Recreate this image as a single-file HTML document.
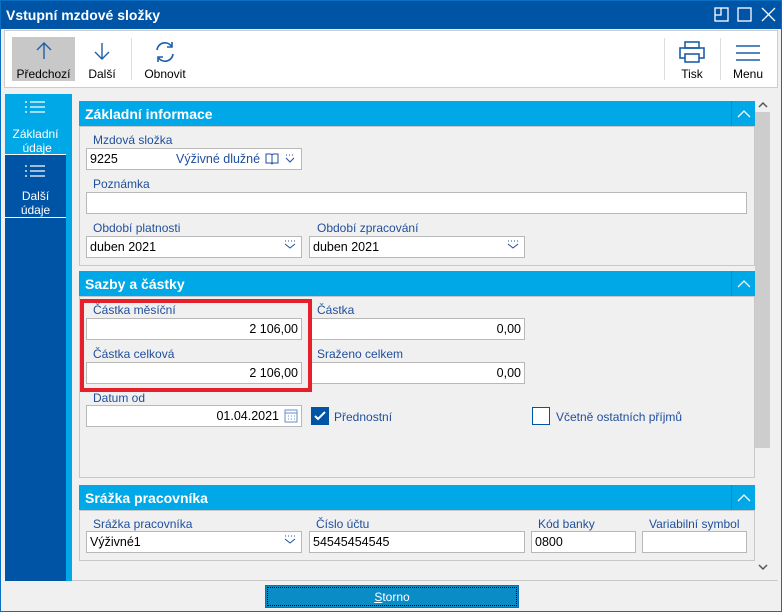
<!DOCTYPE html>
<html><head><meta charset="utf-8"><style>
*{box-sizing:border-box;margin:0;padding:0}
body{width:782px;height:612px;background:#f0f0f0;font-family:"Liberation Sans",sans-serif;font-size:12px;position:relative;overflow:hidden}
.a{position:absolute}
.title{left:0;top:0;width:782px;height:29px;background:#0054a6;color:#fff;font-weight:bold;font-size:14px;padding:7px 6px}
.tb{left:4px;top:30px;width:774px;height:58px;background:#fff;border:1px solid #ccc}
.btn{text-align:center;color:#000;font-size:12px}
.lbl{color:#1f4e9c;font-size:12px}
.in{background:#fff;border:1px solid #b8b8b8;height:22px;padding:3px 3px;font-size:12.5px;color:#000}
.r{text-align:right}
.hd{background:#00a8e8;color:#fff;font-weight:bold;font-size:14px;padding:5px 6px;height:25px;left:79px;width:676px}
.bd{border:1px solid #c8c8c8;left:79px;width:676px}
.car{right:0;top:0;width:24px;height:25px;border-left:1px solid #0a8cc7}
</style></head><body>
<div class="a title">Vstupní mzdové složky</div>
<svg class="a" style="left:714px;top:7px" width="62" height="16" fill="none" stroke="#fff" stroke-width="1.3"><rect x="1" y="1" width="13" height="13"/><path d="M1 8h6V1"/><rect x="24" y="1" width="13" height="13"/><path d="M48 1l13 13M61 1L48 14"/></svg>
<div class="a tb"></div>
<div class="a" style="left:12px;top:37px;width:63px;height:44px;background:#c8c8c8"></div>
<svg class="a" style="left:34px;top:42px" width="20" height="18" fill="none" stroke="#1d5fa8" stroke-width="1.4"><path d="M10 1v16M3 8l7-7 7 7"/></svg>
<div class="a btn" style="left:12px;top:67px;width:63px">Předchozí</div>
<svg class="a" style="left:92px;top:42px" width="20" height="18" fill="none" stroke="#1d5fa8" stroke-width="1.4"><path d="M10 1v16M3 10l7 7 7-7"/></svg>
<div class="a btn" style="left:82px;top:67px;width:40px">Další</div>
<div class="a" style="left:131px;top:38px;width:1px;height:42px;background:#ddd"></div>
<svg class="a" style="left:154px;top:41px" width="22" height="22" fill="none" stroke="#1d5fa8" stroke-width="1.6"><path d="M3 9a8 8 0 0 1 15-3M19 13a8 8 0 0 1-15 3"/><path d="M18 1v5h-5M4 21v-5h5"/></svg>
<div class="a btn" style="left:140px;top:67px;width:50px">Obnovit</div>
<div class="a" style="left:664px;top:38px;width:1px;height:42px;background:#ddd"></div>
<div class="a" style="left:720px;top:38px;width:1px;height:42px;background:#ddd"></div>
<svg class="a" style="left:679px;top:41px" width="26" height="22" fill="none" stroke="#1d5fa8" stroke-width="1.6"><rect x="6" y="1" width="14" height="6"/><rect x="1" y="7" width="24" height="10"/><rect x="6" y="13" width="14" height="8" fill="#fff"/></svg>
<div class="a btn" style="left:672px;top:67px;width:40px">Tisk</div>
<svg class="a" style="left:736px;top:44px" width="24" height="18" stroke="#1d5fa8" stroke-width="1.6"><path d="M0 2h24M0 9h24M0 16h24"/></svg>
<div class="a btn" style="left:728px;top:67px;width:40px">Menu</div>

<div class="a" style="left:5px;top:94px;width:61px;height:487px;background:#0054a6"></div>
<div class="a" style="left:66px;top:94px;width:6px;height:487px;background:#00a8e8"></div>
<div class="a" style="left:5px;top:94px;width:61px;height:60px;background:#00a8e8"></div>
<div class="a" style="left:5px;top:154px;width:61px;height:1px;background:#fff"></div>
<div class="a" style="left:5px;top:217px;width:61px;height:1px;background:#fff"></div>
<svg class="a" style="left:24px;top:100px" width="22" height="16" stroke="#fff" stroke-width="1.2"><path d="M1 2h2M1 7h2M1 12h2M6 2h15M6 7h15M6 12h15"/></svg>
<div class="a" style="left:5px;top:127px;width:61px;color:#fff;text-align:center;line-height:14px">Základní<br>&nbsp;údaje</div>
<svg class="a" style="left:24px;top:164px" width="22" height="16" stroke="#fff" stroke-width="1.2"><path d="M1 2h2M1 7h2M1 12h2M6 2h15M6 7h15M6 12h15"/></svg>
<div class="a" style="left:5px;top:189px;width:61px;color:#fff;text-align:center;line-height:14px">Další<br>údaje</div>

<div class="a" style="left:755px;top:112px;width:15px;height:336px;background:#cdcdcd"></div>
<svg class="a" style="left:758px;top:101px" width="10" height="8" fill="none" stroke="#555" stroke-width="1.5"><path d="M1 6l4-4 4 4"/></svg>
<svg class="a" style="left:758px;top:563px" width="10" height="8" fill="none" stroke="#555" stroke-width="1.5"><path d="M1 2l4 4 4-4"/></svg>

<div class="a hd" style="top:101px">Základní informace<div class="a car"><svg width="24" height="25" fill="none" stroke="#fff" stroke-width="1.3"><path d="M6 16l6-6 6 6"/></svg></div></div>
<div class="a bd" style="top:126px;height:140px"></div>
<div class="a lbl" style="left:93px;top:133px">Mzdová složka</div>
<div class="a in" style="left:86px;top:148px;width:216px">9225</div>
<div class="a lbl" style="left:176px;top:152px;font-size:12.5px">Výživné dlužné</div>
<svg class="a" style="left:265px;top:153px" width="36" height="12" fill="none" stroke="#1f4e9c" stroke-width="1"><path d="M1 1h5l1 1 1-1h5v9H8l-1 1-1-1H1zM7 2v8"/><path d="M21 2h1M24 2h1M27 2h1M21 5l4 4 4-4"/></svg>
<div class="a lbl" style="left:93px;top:177px">Poznámka</div>
<div class="a in" style="left:86px;top:192px;width:661px"></div>
<div class="a lbl" style="left:93px;top:221px">Období platnosti</div>
<div class="a in" style="left:86px;top:236px;width:216px">duben 2021</div>
<div class="a lbl" style="left:317px;top:221px">Období zpracování</div>
<div class="a in" style="left:309px;top:236px;width:216px">duben 2021</div>
<svg class="a" style="left:284px;top:240px" width="14" height="10" fill="none" stroke="#1f4e9c"><path d="M1 1h1M4 1h1M7 1h1M10 1h1M1 4l5 4 5-4"/></svg>
<svg class="a" style="left:507px;top:240px" width="14" height="10" fill="none" stroke="#1f4e9c"><path d="M1 1h1M4 1h1M7 1h1M10 1h1M1 4l5 4 5-4"/></svg>

<div class="a hd" style="top:271px">Sazby a částky<div class="a car"><svg width="24" height="25" fill="none" stroke="#fff" stroke-width="1.3"><path d="M6 16l6-6 6 6"/></svg></div></div>
<div class="a bd" style="top:296px;height:182px"></div>
<div class="a lbl" style="left:93px;top:303px">Částka měsíční</div>
<div class="a in r" style="left:86px;top:318px;width:216px">2 106,00</div>
<div class="a lbl" style="left:317px;top:303px">Částka</div>
<div class="a in r" style="left:309px;top:318px;width:216px">0,00</div>
<div class="a lbl" style="left:93px;top:347px">Částka celková</div>
<div class="a in r" style="left:86px;top:362px;width:216px">2 106,00</div>
<div class="a lbl" style="left:317px;top:347px">Sraženo celkem</div>
<div class="a in r" style="left:309px;top:362px;width:216px">0,00</div>
<div class="a" style="left:80px;top:299px;width:232px;height:93px;border:4px solid #e5202a"></div>
<div class="a lbl" style="left:93px;top:391px">Datum od</div>
<div class="a in r" style="left:86px;top:405px;width:216px;padding-right:22px">01.04.2021</div>
<svg class="a" style="left:284px;top:409px" width="14" height="14" fill="none" stroke="#6a8fc5"><rect x="1" y="1" width="12" height="12"/><path d="M1 4h12M4 7h1M7 7h1M10 7h1M4 10h1M7 10h1M10 10h1"/></svg>
<div class="a" style="left:311px;top:407px;width:18px;height:18px;background:#0054a6"></div>
<svg class="a" style="left:311px;top:407px" width="18" height="18" fill="none" stroke="#fff" stroke-width="2"><path d="M4 9l3 3 7-7"/></svg>
<div class="a lbl" style="left:334px;top:410px">Přednostní</div>
<div class="a" style="left:532px;top:407px;width:18px;height:18px;background:#fff;border:1px solid #0054a6"></div>
<div class="a lbl" style="left:556px;top:410px">Včetně ostatních příjmů</div>

<div class="a hd" style="top:485px">Srážka pracovníka<div class="a car"><svg width="24" height="25" fill="none" stroke="#fff" stroke-width="1.3"><path d="M6 16l6-6 6 6"/></svg></div></div>
<div class="a bd" style="top:510px;height:51px"></div>
<div class="a lbl" style="left:93px;top:517px">Srážka pracovníka</div>
<div class="a in" style="left:86px;top:531px;width:216px">Výživné1</div>
<svg class="a" style="left:284px;top:535px" width="14" height="10" fill="none" stroke="#1f4e9c"><path d="M1 1h1M4 1h1M7 1h1M10 1h1M1 4l5 4 5-4"/></svg>
<div class="a lbl" style="left:316px;top:517px">Číslo účtu</div>
<div class="a in" style="left:309px;top:531px;width:216px">54545454545</div>
<div class="a lbl" style="left:538px;top:517px">Kód banky</div>
<div class="a in" style="left:531px;top:531px;width:105px">0800</div>
<div class="a lbl" style="left:649px;top:517px">Variabilní symbol</div>
<div class="a in" style="left:642px;top:531px;width:105px"></div>

<div class="a" style="left:72px;top:580px;width:706px;height:1px;background:#c8c8c8"></div>
<div class="a" style="left:265px;top:585px;width:254px;height:23px;background:#0a8cc7;border:1px solid #0a6fc2;outline:1px dotted #000;outline-offset:-3px;color:#fff;text-align:center;padding-top:4px"><u>S</u>torno</div>
<div class="a" style="left:0;top:0;width:782px;height:612px;border:1px solid #0a6fc2;pointer-events:none"></div>
</body></html>
